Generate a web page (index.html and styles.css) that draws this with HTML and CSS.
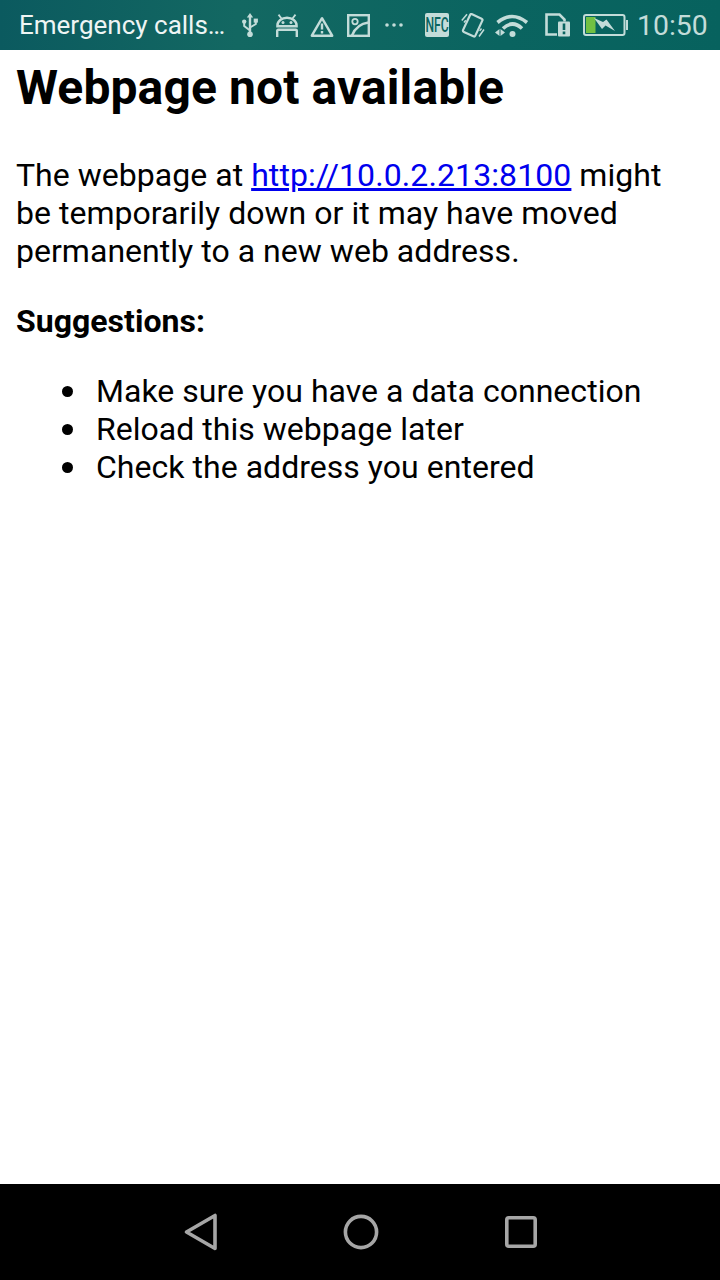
FILE: index.html
```html
<!DOCTYPE html>
<html lang="en">
<head>
    <meta charset="UTF-8">
    <meta name="viewport" content="width=device-width, initial-scale=1.0">
    <title>Webpage not available</title>
    <link rel="stylesheet" href="styles.css">
</head>
<body>
    <div class="phone">
        <div class="statusbar">
            <span class="carrier">Emergency calls…</span>
            <svg class="icon" width="16" height="24" viewBox="0 0 16 24">
                <path d="M8 0l3.2 4.4H9.2v15h-2.4v-15H4.8z" fill="#c3dcd9"/>
                <circle cx="8" cy="21.2" r="2.8" fill="#c3dcd9"/>
                <path d="M8 17.5L2.2 13V10M8 14.5l5.8-3.5V9" fill="none" stroke="#c3dcd9" stroke-width="2"/>
                <circle cx="2.2" cy="8.6" r="2.2" fill="#c3dcd9"/>
                <rect x="11.7" y="5.6" width="4.2" height="4" fill="#c3dcd9"/>
            </svg>
            <svg class="icon icon-android" width="24" height="23" viewBox="0 0 24 23">
                <path d="M2.4 12.2V11.5a9.6 7.8 0 0 1 19.2 0v.7z" fill="none" stroke="#c3dcd9" stroke-width="2.4"/>
                <path d="M3.5 0.6l3.2 4.2M20.5 0.6l-3.2 4.2" stroke="#c3dcd9" stroke-width="1.8"/>
                <path d="M2.2 23v-6.2a1 1 0 0 1 1-1h17.600a1 1 0 0 1 1 1V23" fill="none" stroke="#c3dcd9" stroke-width="2.4"/>
                <circle cx="8" cy="8.600" r="1.500" fill="#c3dcd9"/>
                <circle cx="16" cy="8.600" r="1.500" fill="#c3dcd9"/>
            </svg>
            <svg class="icon icon-warning" width="24" height="21" viewBox="0 0 24 21">
                <path d="M12 2.200L1.800 19.700h20.400z" fill="none" stroke="#c3dcd9" stroke-width="2.400" stroke-linejoin="round"/>
                <path d="M12 7.500v6M12 15v2.600" stroke="#c3dcd9" stroke-width="2.400"/>
            </svg>
            <svg class="icon icon-picture" width="23" height="23" viewBox="0 0 23 23">
                <rect x="1.200" y="1.200" width="20.600" height="20.600" fill="none" stroke="#c3dcd9" stroke-width="2.400"/>
                <circle cx="8" cy="7.600" r="2.700" fill="none" stroke="#c3dcd9" stroke-width="1.800"/>
                <path d="M5 21.500C8 14 13 9.500 21.500 8.500" fill="none" stroke="#c3dcd9" stroke-width="2.400"/>
            </svg>
            <svg class="icon icon-dots" width="18" height="4" viewBox="0 0 18 4">
                <circle cx="2" cy="2" r="1.800" fill="#c3dcd9"/>
                <circle cx="9" cy="2" r="1.800" fill="#c3dcd9"/>
                <circle cx="16" cy="2" r="1.800" fill="#c3dcd9"/>
            </svg>
            <span class="nfc"><span class="nfc-text">NFC</span></span>
            <svg class="icon icon-vibrate" width="24" height="25" viewBox="0 0 24 25">
                <rect x="5" y="2.500" width="13.500" height="19.500" rx="1.500" transform="rotate(25 11.700 12.200)" fill="none" stroke="#c3dcd9" stroke-width="2.200"/>
                <path d="M0.800 7.500L6 1.200M3 9.500L4.800 7.300M23 16.500l-5 7M20.500 15.500l-1.800 2.400" fill="none" stroke="#c3dcd9" stroke-width="1.500"/>
            </svg>
            <svg class="icon icon-wifi" width="35" height="24" viewBox="0 0 35 24">
                <path d="M2.500 9.500Q17 -2.500 32 9.500" fill="none" stroke="#c3dcd9" stroke-width="3.600"/>
                <path d="M8 15.500Q17.500 6.500 27 15.500" fill="none" stroke="#c3dcd9" stroke-width="3.600"/>
                <circle cx="17.500" cy="21" r="3" fill="#c3dcd9"/>
                <path d="M0 19.500l4.500-3.500v7zM5.500 16l4.500 3.500-4.500 3.500z" fill="#c3dcd9"/>
            </svg>
            <svg class="icon icon-sim" width="25" height="24" viewBox="0 0 25 24">
                <path d="M12 21.500H1.500V1.500h13l5 5v2" fill="none" stroke="#c3dcd9" stroke-width="2.600"/>
                <rect x="13" y="8.500" width="12" height="15" rx="1" fill="#c3dcd9"/>
                <path d="M19 10.500v6.500M19 18.500v2.800" stroke="#0a6460" stroke-width="2.600"/>
            </svg>
            <svg class="icon icon-battery" width="45" height="22" viewBox="0 0 45 22">
                <rect x="1" y="1" width="40.500" height="20" rx="2" fill="none" stroke="#c3dcd9" stroke-width="2"/>
                <rect x="3" y="3" width="9.500" height="16" fill="#72c043"/>
                <rect x="43" y="6" width="2" height="10" fill="#c3dcd9"/>
                <path d="M11 4L20 8 23.500 5.500 32 17 22.500 11.500 19 15z" fill="#c3dcd9"/>
            </svg>
            <span class="clock">10:50</span>
        </div>

        <div class="content">
            <h1 class="title">Webpage not available</h1>
            <p class="text">The webpage at <a class="link" href="#">http://10.0.2.213:8100</a> might be temporarily down or it may have moved permanently to a new web address.</p>
            <p class="text"><b>Suggestions:</b></p>
            <ul class="list">
                <li class="item">Make sure you have a data connection</li>
                <li class="item">Reload this webpage later</li>
                <li class="item">Check the address you entered</li>
            </ul>
        </div>

        <div class="navbar">
            <svg width="34" height="38" viewBox="-1 0 34 38">
                <path d="M31 2.500v33L2.500 19z" fill="none" stroke="#a6a6a6" stroke-width="3.600" stroke-linejoin="round"/>
            </svg>
            <svg width="36" height="36" viewBox="0 0 36 36">
                <circle cx="18" cy="18" r="15.600" fill="none" stroke="#a6a6a6" stroke-width="3.600"/>
            </svg>
            <svg width="32" height="32" viewBox="0 0 32 32">
                <rect x="1.800" y="1.800" width="28.400" height="28.400" rx="2" fill="none" stroke="#a6a6a6" stroke-width="3.600"/>
            </svg>
        </div>
    </div>
</body>
</html>
```

FILE: styles.css
```css
body {
    margin: 0;
    font-family: Roboto, "Liberation Sans", sans-serif;
    background: #fff;
    color: #000;
}

.phone {
    display: flex;
    flex-direction: column;
    width: 720px;
    height: 1280px;
    overflow: hidden;
}

/* status bar: one row, the margins follow the icon spacing */
.statusbar {
    display: flex;
    align-items: center;
    height: 50px;
    padding-left: 19px;
    flex-shrink: 0;
    background: linear-gradient(90deg, #0b5a5f 0%, #136862 33%, #0a6460 70%, #07625e 100%);
}

.carrier {
    width: 223px;
    font-size: 26px;
    color: #eef5f4;
    white-space: nowrap;
}

.icon {
    display: block;
    flex-shrink: 0;
}

.icon-android { margin-left: 17px; }
.icon-warning { margin-left: 11px; margin-top: 3px; }
.icon-picture { margin-left: 13px; }
.icon-dots { margin-left: 15px; }
.icon-vibrate { margin-left: 12px; }
.icon-wifi { margin-left: 10px; }
.icon-sim { margin-left: 15px; }
.icon-battery { margin-left: 13px; }

.nfc {
    display: flex;
    align-items: center;
    justify-content: center;
    width: 24px;
    height: 24px;
    margin-left: 22px;
    border-radius: 2px;
    background: #c3dcd9;
    overflow: hidden;
}

.nfc-text {
    color: #0a6460;
    font-size: 21px;
    font-weight: 500;
    transform: scaleX(0.58);
}

.clock {
    margin-left: 9px;
    font-size: 28.4px;
    color: #c3dcd9;
}

.content {
    flex: 1;
    padding: 0 20px 0 16px;
}

.title {
    margin: 10px 0 40px;
    font-size: 48px;
    font-weight: 700;
    line-height: 56px;
    letter-spacing: 0.1px;
}

.text {
    margin: 0 0 32px;
    font-size: 32px;
    line-height: 38px;
    letter-spacing: 0.03px;
}

.link {
    color: #0000ee;
    letter-spacing: 0.1px;
}

.list {
    margin: 0;
    padding-left: 80px;
    list-style: none;
    font-size: 32px;
    line-height: 38px;
    letter-spacing: 0.03px;
}

.item {
    display: flex;
    align-items: center;
}

.item::before {
    content: "";
    flex-shrink: 0;
    width: 11px;
    height: 11px;
    margin: 0 23px 0 -34px;
    border-radius: 50%;
    background: #000;
}

.navbar {
    display: flex;
    align-items: center;
    justify-content: center;
    gap: 126px;
    height: 96px;
    flex-shrink: 0;
    background: #000;
}
```
